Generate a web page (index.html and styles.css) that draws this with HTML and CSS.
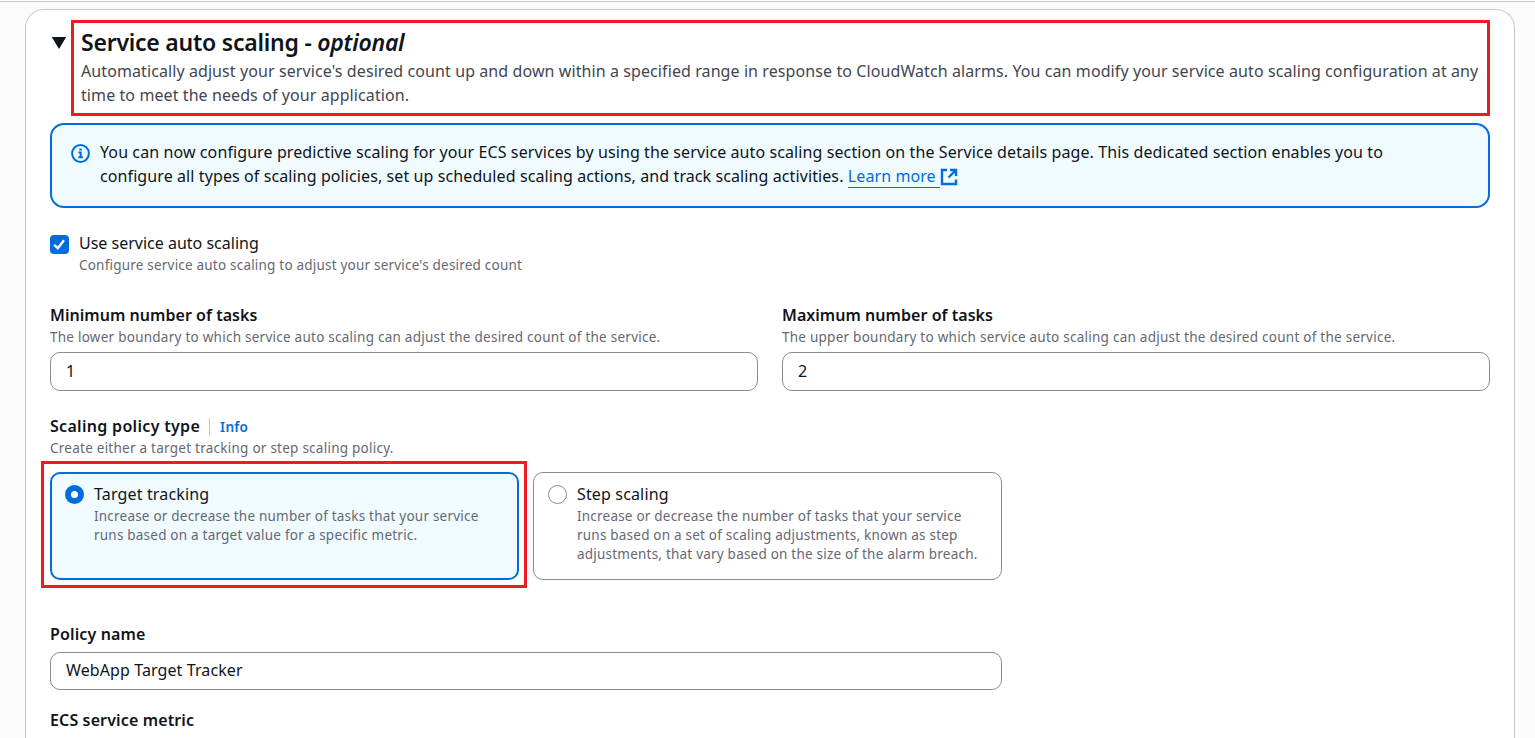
FILE: index.html
```html
<!DOCTYPE html>
<html lang="en">
<head>
<meta charset="utf-8">
<title>Service auto scaling</title>
<link rel="stylesheet" href="styles.css">
</head>
<body>
<main class="page">
<section class="panel">
  <header class="panel-header">
    <svg class="caret" viewBox="0 0 16 13" width="16" height="13"><path d="M.8 1h14.400L8 13z"/></svg>
    <div class="header-text marked">
      <h2 class="title">Service auto scaling - <i>optional</i></h2>
      <p class="description">Automatically adjust your service's desired count up and down within a specified range in response to CloudWatch alarms. You can modify your service auto scaling configuration at any<br>time to meet the needs of your application.</p>
    </div>
  </header>

  <div class="alert">
    <svg class="info-icon" viewBox="0 0 20 20" width="20" height="20"><circle cx="10.500" cy="10.500" r="8.400"/><path d="M8.500 9.500h2.200v4.500M8.300 14.300h4.600M9.300 6.500h2.400"/></svg>
    <p class="alert-text">You can now configure predictive scaling for your ECS services by using the service auto scaling section on the Service details page. This dedicated section enables you to<br>configure all types of scaling policies, set up scheduled scaling actions, and track scaling activities. <a class="link">Learn more&nbsp;</a><svg class="external" viewBox="0 0 18 18" width="18" height="18"><path d="M7 2H2v14h14v-4.500M10 2h6v6M16 2L8.500 9.500"/></svg></p>
  </div>

  <div class="check-row">
    <span class="checkbox"><svg viewBox="0 0 19 19" width="19" height="19"><path d="M4.200 9.800l3.600 3.400 6.200-8"/></svg></span>
    <div>
      <div class="text">Use service auto scaling</div>
      <div class="hint">Configure service auto scaling to adjust your service's desired count</div>
    </div>
  </div>

  <div class="task-grid">
    <div class="field">
      <div class="label label-tight">Minimum number of tasks</div>
      <div class="hint">The lower boundary to which service auto scaling can adjust the desired count of the service.</div>
      <div class="input">1</div>
    </div>
    <div class="field">
      <div class="label label-tight">Maximum number of tasks</div>
      <div class="hint">The upper boundary to which service auto scaling can adjust the desired count of the service.</div>
      <div class="input">2</div>
    </div>
  </div>

  <div class="policy-type">
    <div class="label label-wide">Scaling policy type<a class="info">Info</a></div>
    <div class="hint">Create either a target tracking or step scaling policy.</div>
    <div class="tiles">
      <div class="tile selected">
        <span class="radio"></span>
        <div>
          <div class="text">Target tracking</div>
          <div class="hint">Increase or decrease the number of tasks that your service<br>runs based on a target value for a specific metric.</div>
        </div>
      </div>
      <div class="tile">
        <span class="radio"></span>
        <div>
          <div class="text">Step scaling</div>
          <div class="hint">Increase or decrease the number of tasks that your service<br>runs based on a set of scaling adjustments, known as step<br>adjustments, that vary based on the size of the alarm breach.</div>
        </div>
      </div>
    </div>
  </div>

  <div class="policy-name">
    <div class="label">Policy name</div>
    <div class="input">WebApp Target Tracker</div>
  </div>
  <div class="label">ECS service metric</div>
</section>
</main>
</body>
</html>
```
FILE: styles.css
```css
* { box-sizing: border-box; }
body { margin: 0; height: 738px; overflow: hidden; background: #fcfcfd; color: #0f141a; font: 16px/24px "Noto Sans", sans-serif; white-space: nowrap; }
.page { padding: 7px 20px 0 25px; border-top: 1px solid #c6c6cd; margin-top: 1px; }
.panel { height: 729px; padding: 10px 24px 0; background: #fff; border: 1px solid #c6c6cd; border-bottom: 0; border-radius: 19px 19px 0 0; }
.panel-header { display: flex; }
.caret { margin: 16px 4px 0 1px; flex: none; fill: #0f141a; }
.marked { border: 3px solid #ed1c24; }
.header-text { flex: 1; height: 96px; padding: 6px 7px; }
h2, p { margin: 0; }
.title { font-size: 23px; line-height: 26px; font-weight: 600; letter-spacing: -0.23px; }
.description { color: #424650; margin-top: 4px; letter-spacing: 0.09px; }
.alert { display: flex; gap: 10px; height: 85px; margin-top: 7px; padding: 15px 18px; border: 2px solid #006ce0; border-radius: 14px; background: #f0fbff; }
.alert-text { letter-spacing: 0.097px; }
.info-icon { margin-top: 3px; fill: none; stroke: #006ce0; stroke-width: 2; flex: none; }
.link { color: #006ce0; border-bottom: 1px solid; }
.external { vertical-align: -4px; fill: none; stroke: #006ce0; stroke-width: 2.4; }
.check-row { display: flex; gap: 10px; margin-top: 23px; }
.checkbox { width: 19px; height: 19px; margin-top: 4px; border-radius: 4px; background: #006ce0; }
.checkbox svg { display: block; fill: none; stroke: #fff; stroke-width: 2.4; }
.hint { margin-top: 1px; font-size: 13.5px; line-height: 19px; color: #656871; letter-spacing: 0.25px; }
.check-row .hint { letter-spacing: 0.205px; }
.label { font-weight: 600; letter-spacing: 0.13px; }
.label-tight { letter-spacing: 0.04px; }
.label-wide { height: 24px; letter-spacing: 0.31px; }
.task-grid { display: grid; grid-template-columns: 1fr 1fr; gap: 24px; margin-top: 28px; }
.input { height: 39px; margin-top: 5px; padding: 6px 15px; border: 1px solid #8c8c94; border-radius: 10px; background: #fff; letter-spacing: 0.1px; }
.policy-type { margin-top: 23px; }
.info { margin-left: 9px; padding-left: 10px; border-left: 1px solid #c6c6cd; color: #006ce0; font-size: 13.5px; }
.tiles { display: grid; grid-template-columns: 469px 469px; gap: 14px; margin-top: 14px; }
.tile { display: flex; gap: 10px; height: 108px; padding: 9px 14px; border: 1px solid #8c8c94; border-radius: 10px; }
.tile .text { letter-spacing: 0.15px; }
.tile .hint { letter-spacing: 0.215px; }
.selected { position: relative; border: 2px solid #006ce0; background: #f0fbff; padding: 8px 13px; }
.selected::after { content: ""; position: absolute; inset: -13px -10px -10px -11px; border: 3px solid #ed1c24; }
.radio { width: 19px; height: 19px; margin-top: 3px; border: 1px solid #8c8c94; border-radius: 50%; flex: none; }
.selected .radio { border: 6px solid #006ce0; background: #fff; }
.policy-name { width: 952px; margin-top: 42px; margin-bottom: 18px; }
.policy-name .input { height: 38px; margin-top: 6px; padding-top: 5px; }
```
